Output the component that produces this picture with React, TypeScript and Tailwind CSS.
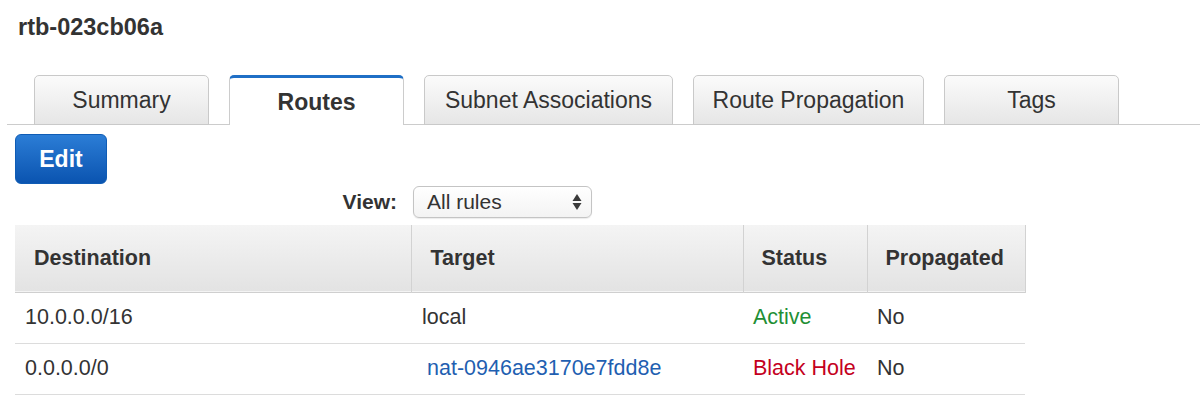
import React from "react";

const tabs = [
  { label: "Summary", w: "w-[175px]" },
  { label: "Routes", w: "w-[175px]", active: true },
  { label: "Subnet Associations", w: "w-[249px]" },
  { label: "Route Propagation", w: "w-[231px]" },
  { label: "Tags", w: "w-[175px]" },
];

export default function App() {
  return (
    <div className="w-[1200px] h-[420px] overflow-hidden bg-white text-[#333] font-['Liberation_Sans',Arial,sans-serif]">
      <h1 className="pl-[18px] pt-[14px] text-[23.5px] leading-[26px] font-bold text-[#333]">
        rtb-023cb06a
      </h1>

      <div className="mt-[35px] ml-[7px] pl-[27px] flex gap-[20px] h-[50px] border-b border-[#cccccc]">
        {tabs.map((t) =>
          t.active ? (
            <div
              key={t.label}
              className={`${t.w} h-[50px] -mb-px flex items-center justify-center bg-white border-t-[3px] border-t-[#1f6fc6] border-x border-x-[#cccccc] rounded-t-[5px] text-[23px] font-bold text-[#333] pt-[2px]`}
            >
              {t.label}
            </div>
          ) : (
            <div
              key={t.label}
              className={`${t.w} h-[50px] flex items-center justify-center bg-gradient-to-b from-[#fbfbfb] to-[#e6e6e6] border border-[#c9c9c9] rounded-t-[5px] text-[23px] text-[#333]`}
            >
              {t.label}
            </div>
          )
        )}
      </div>

      <button className="mt-[9px] ml-[15px] w-[92px] h-[50px] flex items-center justify-center rounded-[6px] border border-[#0f5cb5] bg-gradient-to-b from-[#2b7dd6] to-[#0a54b0] text-white text-[23px] font-bold">
        Edit
      </button>

      <div className="mt-[2px] ml-[341px] flex items-center gap-[16px] h-[32px]">
        <span className="w-[56px] text-right text-[21px] font-bold text-[#333]">View:</span>
        <div className="w-[179px] h-[32px] flex items-center justify-between pl-[13px] pr-[9px] rounded-[6px] border border-[#c4c4c4] bg-gradient-to-b from-white to-[#f3f3f3] shadow-[0_1px_1px_rgba(0,0,0,0.08)]">
          <span className="text-[21px] text-[#333]">All rules</span>
          <svg width="10" height="18" viewBox="0 0 10 18">
            <polygon points="5,1 9.5,8 0.5,8" fill="#3a3a3a" />
            <polygon points="0.5,10 9.5,10 5,17" fill="#3a3a3a" />
          </svg>
        </div>
      </div>

      <table className="mt-[7px] ml-[15px] w-[1010px] border-collapse table-fixed">
        <colgroup>
          <col className="w-[396px]" />
          <col className="w-[332px]" />
          <col className="w-[124px]" />
          <col className="w-[158px]" />
        </colgroup>
        <thead>
          <tr className="h-[67px] bg-gradient-to-b from-[#f4f4f4] to-[#e3e3e3] border-b border-[#cfcfcf]">
            <th className="text-left pl-[19px] text-[21.5px] font-bold text-[#333] border-r border-r-[#d2d2d2]">Destination</th>
            <th className="text-left pl-[19px] text-[21.5px] font-bold text-[#333] border-r border-r-[#d2d2d2]">Target</th>
            <th className="text-left pl-[18px] text-[21.5px] font-bold text-[#333] border-r border-r-[#d2d2d2]">Status</th>
            <th className="text-left pl-[18px] text-[21.5px] font-bold text-[#333] border-r border-r-[#d2d2d2]">Propagated</th>
          </tr>
        </thead>
        <tbody>
          <tr className="h-[51px] border-b border-[#dcdcdc]">
            <td className="pl-[10px] text-[21.5px] text-[#333]">10.0.0.0/16</td>
            <td className="pl-[11px] text-[21.5px] text-[#333]">local</td>
            <td className="pl-[10px] text-[21.5px] text-[#1f8f35]">Active</td>
            <td className="pl-[10px] text-[21.5px] text-[#333]">No</td>
          </tr>
          <tr className="h-[51px] border-b border-[#dcdcdc]">
            <td className="pl-[10px] text-[21.5px] text-[#333]">0.0.0.0/0</td>
            <td className="pl-[16px] text-[21.5px] text-[#1f5fb1]">nat-0946ae3170e7fdd8e</td>
            <td className="pl-[10px] text-[21.5px] text-[#c4001d]">Black Hole</td>
            <td className="pl-[10px] text-[21.5px] text-[#333]">No</td>
          </tr>
        </tbody>
      </table>
    </div>
  );
}
